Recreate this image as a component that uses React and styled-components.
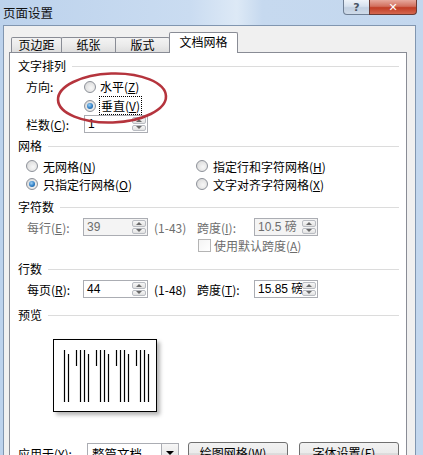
import React from 'react';
import styled, { createGlobalStyle } from 'styled-components';

const GlobalStyle = createGlobalStyle`
  html, body {
    margin: 0;
    padding: 0;
    overflow: hidden;
    background: #c9dbef;
  }
  body {
    font-family: "Noto Sans CJK SC", "Liberation Sans", sans-serif;
    font-size: 12px;
    color: #000;
  }
`;

const Win = styled.div`
  position: relative;
  width: 423px;
  height: 455px;
  overflow: hidden;
  display: flex;
  flex-direction: column;
  background: linear-gradient(90deg, #bcd2ec 0%, #cadcf1 45%, #dde9f6 56%, #c6d9ef 62%, #c3d7ee 100%);
`;

const TitleBar = styled.div`
  height: 25px;
  flex: none;
  display: flex;
  align-items: flex-start;
  justify-content: space-between;
  padding-left: 3px;
  box-sizing: border-box;
`;

const Title = styled.div`
  font-size: 12.5px;
  line-height: 25px;
  color: #111;
`;

const Controls = styled.div`
  display: flex;
  margin-right: 6px;
`;

const CaptionButton = styled.div`
  height: 15px;
  width: ${({ $close }) => ($close ? '48px' : '27px')};
  box-sizing: border-box;
  border: 1px solid ${({ $close }) => ($close ? '#6b3a33' : '#6f7f94')};
  border-top: none;
  border-radius: ${({ $close }) => ($close ? '0 0 4px 0' : '0 0 0 4px')};
  margin-left: ${({ $close }) => ($close ? '-1px' : '0')};
  display: flex;
  align-items: center;
  justify-content: center;
  font-family: "DejaVu Sans", sans-serif;
  font-weight: bold;
  font-size: 11px;
  line-height: 1;
  color: ${({ $close }) => ($close ? '#fff' : '#4b5565')};
  background: ${({ $close }) =>
    $close
      ? 'linear-gradient(180deg, #e7a99d 0%, #d2705e 45%, #c13d25 55%, #d4674f 100%)'
      : 'linear-gradient(180deg, #eef3f9 0%, #d6e1ee 45%, #c2d0e1 55%, #cfdbe9 100%)'};
`;

const Body = styled.div`
  flex: 1;
  min-height: 0;
  margin: 0 7px 0 3px;
  border: 1px solid #8196b0;
  border-bottom: none;
  background: #f0f0f0;
  padding: 6px 8px 0 5px;
  display: flex;
  flex-direction: column;
  overflow: hidden;
`;

const TabRow = styled.div`
  height: 20px;
  flex: none;
  display: flex;
  align-items: flex-end;
  padding-left: 3px;
  position: relative;
  z-index: 1;
`;

const Tab = styled.div`
  width: ${({ $w }) => $w}px;
  height: ${({ $active }) => ($active ? '21px' : '15px')};
  margin-bottom: ${({ $active }) => ($active ? '-1px' : '0')};
  margin-left: -1px;
  box-sizing: border-box;
  border: 1px solid #898c95;
  border-bottom: none;
  border-radius: 2px 2px 0 0;
  background: ${({ $active }) => ($active ? '#fff' : 'linear-gradient(180deg, #f3f3f3 0%, #ebebeb 50%, #dedede 100%)')};
  display: flex;
  align-items: ${({ $active }) => ($active ? 'flex-start' : 'center')};
  justify-content: center;
  padding-top: ${({ $active }) => ($active ? '2px' : '0')};
  line-height: 14px;
`;

const Panel = styled.div`
  flex: 1;
  min-height: 0;
  border: 1px solid #898c95;
  border-bottom: none;
  background: #fff;
  padding: 5px 7px 0 8px;
  display: flex;
  flex-direction: column;
  overflow: hidden;
`;

const SectionTitle = styled.div`
  display: flex;
  align-items: center;
  gap: 6px;
  height: 16px;
  margin-top: ${({ $mt }) => $mt || 0}px;
  line-height: 16px;
  flex: none;

  &::after {
    content: '';
    flex: 1;
    height: 1px;
    background: #dcdcdc;
  }
`;

const Row = styled.div`
  display: flex;
  align-items: center;
  height: ${({ $h }) => $h || 18}px;
  margin-top: ${({ $mt }) => $mt || 0}px;
  padding-left: ${({ $indent }) => ($indent ?? 8)}px;
  flex: none;
  white-space: nowrap;
`;

const Label = styled.span`
  width: ${({ $w }) => $w}px;
  margin-left: ${({ $ml }) => $ml || 0}px;
  flex: none;
  color: ${({ $disabled }) => ($disabled ? '#6d6d6d' : '#000')};
`;

const Cell = styled.div`
  width: ${({ $w }) => $w}px;
  flex: none;
  display: flex;
  align-items: center;
`;

const Choice = styled.label`
  display: flex;
  align-items: center;
  gap: ${({ $gap }) => $gap || 4}px;
  color: ${({ $disabled }) => ($disabled ? '#6d6d6d' : '#000')};
`;

const RadioDot = styled.span`
  width: 12px;
  height: 12px;
  flex: none;
  box-sizing: border-box;
  border-radius: 50%;
  border: 1px solid #8d9199;
  background: radial-gradient(circle at 60% 60%, #f7f7f7 0%, #e4e4e4 55%, #cfcfcf 100%);
  display: flex;
  align-items: center;
  justify-content: center;

  &::after {
    content: '';
    display: ${({ $on }) => ($on ? 'block' : 'none')};
    width: 6px;
    height: 6px;
    border-radius: 50%;
    background: radial-gradient(circle at 40% 35%, #9fd0f4 0%, #2f7fc6 55%, #174e86 100%);
  }
`;

const CheckBox = styled.span`
  width: 13px;
  height: 13px;
  flex: none;
  box-sizing: border-box;
  border: 1px solid #b4b4b4;
  background: linear-gradient(135deg, #f4f4f4 0%, #ffffff 100%);
`;

const Focus = styled.span`
  outline: 1px dotted #000;
  outline-offset: 0;
  padding: 0 1px;
`;

const Mn = styled.span`
  text-decoration: underline;
`;

const Spin = styled.div`
  width: ${({ $w }) => $w || 64}px;
  height: 18px;
  flex: none;
  box-sizing: border-box;
  border: 1px solid #abadb3;
  background: ${({ $disabled }) => ($disabled ? '#f4f4f4' : '#fff')};
  display: flex;
`;

const SpinText = styled.div`
  flex: 1;
  min-width: 0;
  overflow: hidden;
  white-space: nowrap;
  padding-left: 3px;
  line-height: 16px;
  font-family: "Liberation Sans", "Noto Sans CJK SC", sans-serif;
  font-size: 12px;
  color: ${({ $disabled }) => ($disabled ? '#6d6d6d' : '#000')};
`;

const SpinButtons = styled.div`
  width: 15px;
  flex: none;
  display: flex;
  flex-direction: column;
  padding: 1px 1px 1px 0;
  box-sizing: border-box;
  gap: 1px;
`;

const SpinHalf = styled.div`
  flex: 1;
  border: 1px solid #b9bcc2;
  border-radius: 2px;
  background: linear-gradient(180deg, #f6f6f6 0%, #e2e2e2 100%);
  display: flex;
  align-items: center;
  justify-content: center;

  &::after {
    content: '';
    border-left: 3px solid transparent;
    border-right: 3px solid transparent;
    ${({ $down }) => ($down ? 'border-top: 3px solid #6a6a6a;' : 'border-bottom: 3px solid #6a6a6a;')}
  }
`;

const Combo = styled.div`
  width: 92px;
  height: 21px;
  flex: none;
  box-sizing: border-box;
  border: 1px solid #abadb3;
  background: #fff;
  display: flex;
`;

const ComboText = styled.div`
  flex: 1;
  padding-left: 4px;
  line-height: 19px;
  font-size: 12.5px;
`;

const DropButton = styled.div`
  width: 16px;
  border-left: 1px solid #abadb3;
  background: linear-gradient(180deg, #f7f7f7 0%, #dedede 100%);
  display: flex;
  align-items: center;
  justify-content: center;

  &::after {
    content: '';
    border-left: 4px solid transparent;
    border-right: 4px solid transparent;
    border-top: 4px solid #000;
  }
`;

const Button = styled.div`
  width: 100px;
  height: 22px;
  flex: none;
  margin-left: ${({ $ml }) => $ml}px;
  box-sizing: border-box;
  border: 1px solid #707070;
  border-radius: 3px;
  background: linear-gradient(180deg, #f2f2f2 0%, #ebebeb 50%, #dddddd 51%, #cfcfcf 100%);
  display: flex;
  align-items: center;
  justify-content: center;
  line-height: 20px;
`;

const PreviewBox = styled.div`
  width: 104px;
  height: 73px;
  margin: 16px 0 0 35px;
  flex: none;
  box-sizing: border-box;
  border: 1px solid #000;
  background: #fff;
  box-shadow: 3px 3px 4px rgba(0, 0, 0, 0.3);
`;

const Mark = styled.svg`
  position: absolute;
  left: 55px;
  top: 71px;
  pointer-events: none;
`;

const SpinBox = ({ value, w, disabled }) => (
  <Spin $w={w} $disabled={disabled}>
    <SpinText $disabled={disabled}>{value}</SpinText>
    <SpinButtons>
      <SpinHalf />
      <SpinHalf $down />
    </SpinButtons>
  </Spin>
);

// vertical text columns shown in the preview page
const lines = [
  [10.5, 10, 62], [14.5, 14, 62],
  ...[22.5, 42.5, 62.5, 82.5].flatMap((x) => [
    [x, 10, 26], [x + 4, 10, 62], [x + 8, 10, 62], [x + 12, 14, 62],
  ]),
];

const Preview = () => (
  <PreviewBox>
    <svg width="102" height="71" viewBox="0 0 102 71">
      {lines.map(([x, y1, y2], i) => (
        <line key={i} x1={x} y1={y1} x2={x} y2={y2} stroke="#000" strokeWidth="1.2" />
      ))}
    </svg>
  </PreviewBox>
);

export default function App() {
  return (
    <>
      <GlobalStyle />
      <Win>
        <TitleBar>
          <Title>页面设置</Title>
          <Controls>
            <CaptionButton>?</CaptionButton>
            <CaptionButton $close>✕</CaptionButton>
          </Controls>
        </TitleBar>
        <Body>
          <TabRow>
            <Tab $w={51}>页边距</Tab>
            <Tab $w={55}>纸张</Tab>
            <Tab $w={55}>版式</Tab>
            <Tab $w={69} $active>文档网格</Tab>
          </TabRow>
          <Panel>
            <SectionTitle>文字排列</SectionTitle>
            <Row $mt={3} $h={19}>
              <Label $w={58}>方向:</Label>
              <Choice>
                <RadioDot />
                <span>水平(<Mn>Z</Mn>)</span>
              </Choice>
            </Row>
            <Row $h={19} $indent={66}>
              <Choice>
                <RadioDot $on />
                <Focus>垂直(<Mn>V</Mn>)</Focus>
              </Choice>
            </Row>
            <Row $h={18}>
              <Label $w={58}>栏数(<Mn>C</Mn>):</Label>
              <SpinBox value="1" w={64} />
            </Row>

            <SectionTitle $mt={5}>网格</SectionTitle>
            <Row $mt={3}>
              <Cell $w={170}>
                <Choice $gap={5}>
                  <RadioDot />
                  <span>无网格(<Mn>N</Mn>)</span>
                </Choice>
              </Cell>
              <Choice $gap={5}>
                <RadioDot />
                <span>指定行和字符网格(<Mn>H</Mn>)</span>
              </Choice>
            </Row>
            <Row>
              <Cell $w={170}>
                <Choice $gap={5}>
                  <RadioDot $on />
                  <span>只指定行网格(<Mn>O</Mn>)</span>
                </Choice>
              </Cell>
              <Choice $gap={5}>
                <RadioDot />
                <span>文字对齐字符网格(<Mn>X</Mn>)</span>
              </Choice>
            </Row>

            <SectionTitle $mt={6}>字符数</SectionTitle>
            <Row $mt={3} $indent={9}>
              <Label $w={56} $disabled>每行(<Mn>E</Mn>):</Label>
              <SpinBox value="39" w={65} disabled />
              <Label $w={43} $ml={6} $disabled>(1-43)</Label>
              <Label $w={57} $disabled>跨度(<Mn>I</Mn>):</Label>
              <SpinBox value="10.5 磅" w={64} disabled />
            </Row>
            <Row $indent={180}>
              <Choice $gap={3} $disabled>
                <CheckBox />
                <span>使用默认跨度(<Mn>A</Mn>)</span>
              </Choice>
            </Row>

            <SectionTitle $mt={7}>行数</SectionTitle>
            <Row $mt={3} $indent={9}>
              <Label $w={56}>每页(<Mn>R</Mn>):</Label>
              <SpinBox value="44" w={65} />
              <Label $w={43} $ml={6}>(1-48)</Label>
              <Label $w={57}>跨度(<Mn>T</Mn>):</Label>
              <SpinBox value="15.85 磅" w={64} />
            </Row>

            <SectionTitle $mt={9}>预览</SectionTitle>
            <Preview />

            <Row $mt={30} $h={22} $indent={0}>
              <Label $w={69}>应用于(<Mn>Y</Mn>):</Label>
              <Combo>
                <ComboText>整篇文档</ComboText>
                <DropButton />
              </Combo>
              <Button $ml={9}>绘图网格(<Mn>W</Mn>)...</Button>
              <Button $ml={11}>字体设置(<Mn>F</Mn>)...</Button>
            </Row>
          </Panel>
        </Body>
        <Mark width="114" height="54" viewBox="0 0 114 54">
          <ellipse cx="57" cy="27" rx="54" ry="24.5" fill="none" stroke="#b5343d" strokeWidth="2.6" transform="rotate(-2 57 27)" />
        </Mark>
      </Win>
    </>
  );
}
